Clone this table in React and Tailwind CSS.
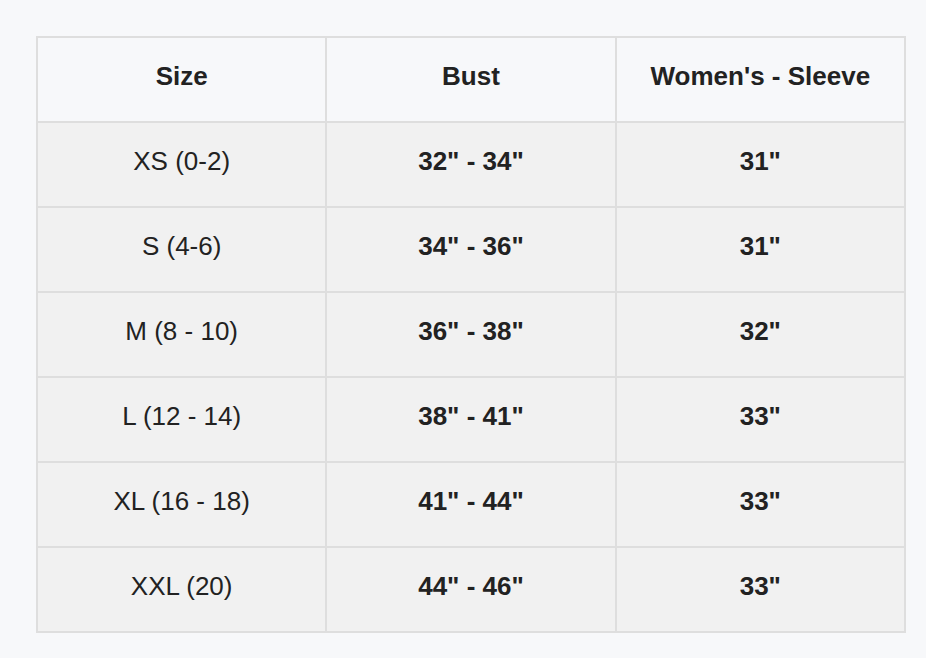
import React from 'react';

const rows = [
  ['XS (0-2)', '32" - 34"', '31"'],
  ['S (4-6)', '34" - 36"', '31"'],
  ['M (8 - 10)', '36" - 38"', '32"'],
  ['L (12 - 14)', '38" - 41"', '33"'],
  ['XL (16 - 18)', '41" - 44"', '33"'],
  ['XXL (20)', '44" - 46"', '33"'],
];

export default function App() {
  return (
    <div
      className="min-h-screen bg-[#f7f8fa] pl-[36px] pt-[36px] text-[#222222]"
      style={{ fontFamily: '"Liberation Sans", Arial, sans-serif' }}
    >
      <div className="grid w-[870px] grid-cols-3 gap-[2px] border-2 border-[#dedede] bg-[#dedede] text-[26px]">
        {['Size', 'Bust', "Women's - Sleeve"].map((h) => (
          <div key={h} className="flex h-[83px] items-center justify-center bg-[#f7f8fa] pb-[7px] font-bold">
            {h}
          </div>
        ))}
        {rows.map((r) => (
          <React.Fragment key={r[0]}>
            <div className="flex h-[83px] items-center justify-center bg-[#f1f1f1] pb-[7px]">{r[0]}</div>
            <div className="flex h-[83px] items-center justify-center bg-[#f1f1f1] pb-[7px] font-bold">{r[1]}</div>
            <div className="flex h-[83px] items-center justify-center bg-[#f1f1f1] pb-[7px] font-bold">{r[2]}</div>
          </React.Fragment>
        ))}
      </div>
    </div>
  );
}
